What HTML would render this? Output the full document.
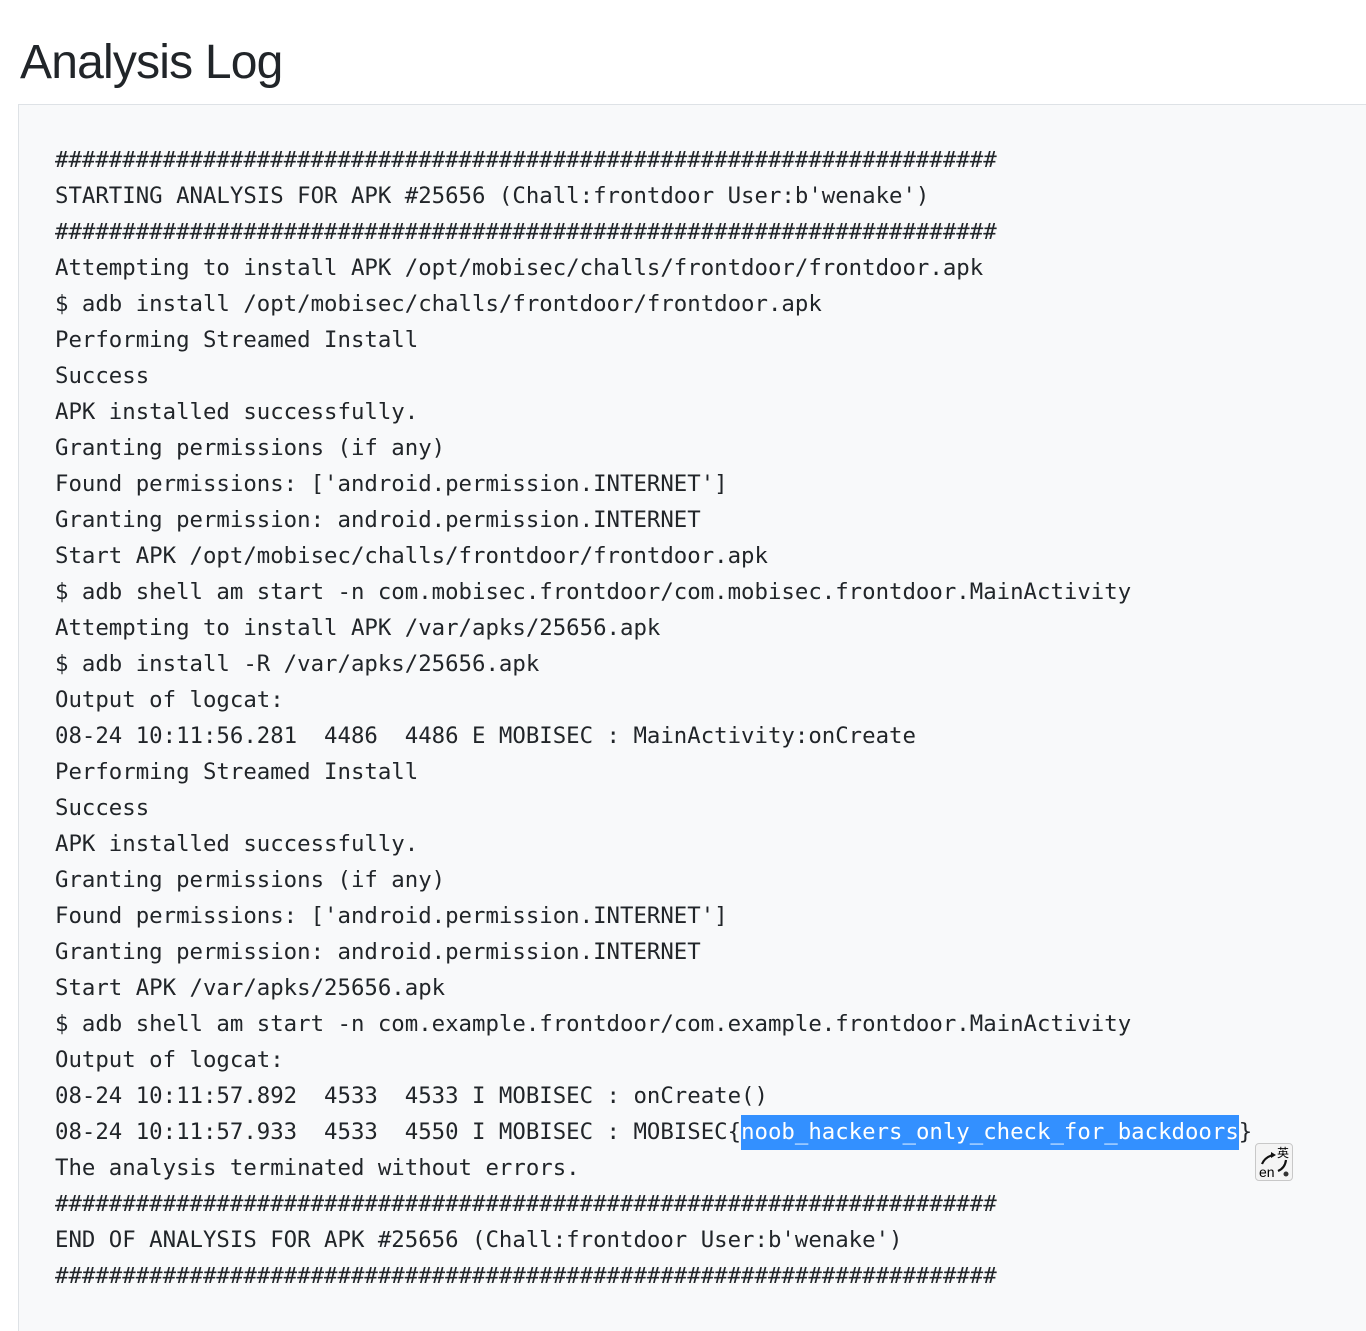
<!DOCTYPE html>
<html><head><meta charset="utf-8"><style>
html,body{margin:0;padding:0;background:#fff;width:1366px;height:1330px;overflow:hidden}
h1{position:absolute;left:20px;top:33px;margin:0;font:400 48px/60px "Liberation Sans",sans-serif;color:#212529;letter-spacing:-0.8px}
.box{position:absolute;left:18px;top:104px;width:1400px;height:1226px;background:#f8f9fa;border-top:1px solid #dee2e6;border-left:1px solid #dee2e6}
pre{position:absolute;left:55px;top:142px;margin:0;font-family:"DejaVu Sans Mono","Liberation Mono",monospace;font-size:22.35px;line-height:36px;color:#212529;white-space:pre}
.sel{background:#3390ff;color:#fff;display:inline-block;line-height:35px}
.ime{position:absolute;left:1255px;top:1143px;width:36px;height:36px;border:1px solid #c8c8c8;border-radius:4px;background:#f4f4f4;font:11px "Liberation Sans","Noto Sans CJK SC",sans-serif}
</style></head><body>
<h1>Analysis Log</h1>
<div class="box"></div>
<pre>######################################################################
STARTING ANALYSIS FOR APK #25656 (Chall:frontdoor User:b'wenake')
######################################################################
Attempting to install APK /opt/mobisec/challs/frontdoor/frontdoor.apk
$ adb install /opt/mobisec/challs/frontdoor/frontdoor.apk
Performing Streamed Install
Success
APK installed successfully.
Granting permissions (if any)
Found permissions: ['android.permission.INTERNET']
Granting permission: android.permission.INTERNET
Start APK /opt/mobisec/challs/frontdoor/frontdoor.apk
$ adb shell am start -n com.mobisec.frontdoor/com.mobisec.frontdoor.MainActivity
Attempting to install APK /var/apks/25656.apk
$ adb install -R /var/apks/25656.apk
Output of logcat:
08-24 10:11:56.281  4486  4486 E MOBISEC : MainActivity:onCreate
Performing Streamed Install
Success
APK installed successfully.
Granting permissions (if any)
Found permissions: ['android.permission.INTERNET']
Granting permission: android.permission.INTERNET
Start APK /var/apks/25656.apk
$ adb shell am start -n com.example.frontdoor/com.example.frontdoor.MainActivity
Output of logcat:
08-24 10:11:57.892  4533  4533 I MOBISEC : onCreate()
08-24 10:11:57.933  4533  4550 I MOBISEC : MOBISEC{<span class="sel">noob_hackers_only_check_for_backdoors</span>}
The analysis terminated without errors.
######################################################################
END OF ANALYSIS FOR APK #25656 (Chall:frontdoor User:b'wenake')
######################################################################</pre>
<div class="ime"><span style="position:absolute;right:3px;top:0px;font-size:12px">英</span><span style="position:absolute;left:3px;bottom:0px;font-size:14px">en</span>
<svg width="36" height="36" style="position:absolute;left:0;top:0"><path d="M6 20 Q9 13 17 11" stroke="#111" stroke-width="2.2" fill="none"/><path d="M15 8 L20 11 L15 14Z" fill="#111"/><path d="M30 16 Q29 24 22 27" stroke="#111" stroke-width="2.2" fill="none"/><circle cx="30" cy="30" r="2.5" fill="#333"/></svg></div>
</body></html>
